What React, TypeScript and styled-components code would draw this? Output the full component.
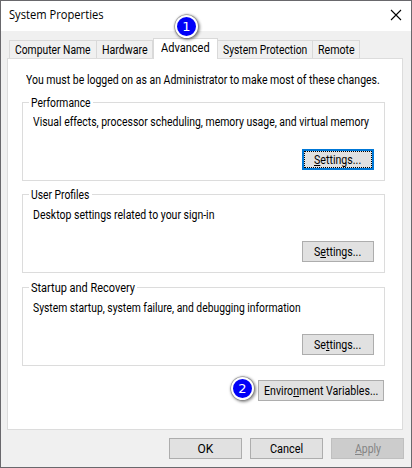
import React from "react";
import styled, { createGlobalStyle } from "styled-components";

const GlobalStyle = createGlobalStyle`
  * { box-sizing: border-box; }
  body {
    margin: 0;
    background: #69686c;
    color: #000;
    font: 12px/14px Roboto, "Liberation Sans", sans-serif;
    white-space: nowrap;
  }
`;

const Desktop = styled.div`
  width: 412px;
  height: 468px;
  padding: 1px;
`;

const Dialog = styled.main`
  display: flex;
  flex-direction: column;
  width: 410px;
  height: 466px;
  background: #f0f0f0;
`;

const TitleBar = styled.header`
  display: flex;
  justify-content: space-between;
  height: 30px;
  padding: 7px 9px 0 8px;
  background: #fff;
  font-family: "Open Sans", "Noto Sans", sans-serif;
`;

const CloseIcon = styled.svg`
  display: block;
  width: 12px;
  height: 12px;
  margin-top: 1px;
`;

/* Condensed label: keeps the glyph height and narrows the advance. */
const LabelBox = styled.span<{ $width: number }>`
  display: block;
  width: ${(p) => p.$width}px;
  height: 14px;
`;

const LabelText = styled.span<{ $scale: number }>`
  display: inline-block;
  transform: scaleX(${(p) => p.$scale});
  transform-origin: 0 0;
`;

const Mnemonic = styled.span`
  text-decoration: underline;
  text-decoration-thickness: 1px;
  text-underline-offset: 1px;
  text-decoration-skip-ink: none;
`;

const Tabs = styled.nav`
  display: flex;
  align-items: flex-end;
  height: 27px;
  padding-left: 8px;
`;

const Tab = styled.div<{ $width: number; $active?: boolean; $joined?: boolean }>`
  position: relative;
  z-index: ${(p) => (p.$active ? 1 : 0)};
  width: ${(p) => p.$width}px;
  height: ${(p) => (p.$active ? 21 : 18)}px;
  margin-bottom: ${(p) => (p.$active ? -1 : 0)}px;
  padding: ${(p) => (p.$active ? "2px 0 0 7px" : "2px 0 0 5px")};
  border: 1px solid #d9d9d9;
  border-bottom: 0;
  border-left-width: ${(p) => (p.$joined ? 0 : 1)}px;
  background: ${(p) => (p.$active ? "#fff" : "#f0f0f0")};
`;

const Panel = styled.section`
  width: 396px;
  height: 372px;
  margin-left: 6px;
  padding: 14px 0 0 14px;
  border: 1px solid #dcdcdc;
  background: #fff;
`;

const Intro = styled.div`
  height: 29px;
  padding-left: 4px;
`;

const Group = styled.section<{ $gap: number }>`
  display: flex;
  flex-direction: column;
  width: 363px;
  height: 79px;
  margin-bottom: ${(p) => p.$gap}px;
  border: 1px solid #dcdcdc;
`;

const GroupTitle = styled.h2`
  align-self: flex-start;
  height: 14px;
  margin: -7px 0 0 6px;
  padding: 0 2px;
  background: #fff;
  font: inherit;
`;

const GroupText = styled.div<{ $top: number }>`
  margin: ${(p) => p.$top}px 0 0 10px;
`;

const Button = styled.button<{ $width: number; $focus?: boolean }>`
  display: flex;
  justify-content: center;
  width: ${(p) => p.$width}px;
  height: 21px;
  padding: ${(p) => (p.$focus ? 0 : 3)}px 0 0;
  border: ${(p) => (p.$focus ? "2px solid #0078d7" : "1px solid #adadad")};
  background: #e1e1e1;
  color: #000;
  font: inherit;

  &:disabled {
    background: #ccc;
    border-color: #bfbfbf;
    color: #838383;
  }
`;

const FocusRing = styled.span`
  display: flex;
  justify-content: center;
  width: 100%;
  height: 17px;
  padding-top: 1px;
  border: 1px dotted #000;
`;

const GroupAction = styled.div`
  margin: auto 10px 10px auto;
`;

const EnvironmentRow = styled.div`
  display: flex;
  justify-content: flex-end;
  margin: 14px 18px 0 0;
`;

const Footer = styled.footer`
  display: flex;
  justify-content: flex-end;
  gap: 8px;
  padding: 8px 7px 0 0;
`;

const BadgeAnchor = styled.span`
  position: relative;
  display: block;
  width: 0;
  height: 0;
`;

const Badge = styled.span<{ $left: number; $top: number }>`
  position: absolute;
  z-index: 2;
  left: ${(p) => p.$left}px;
  top: ${(p) => p.$top}px;
  display: flex;
  align-items: center;
  justify-content: center;
  width: 23px;
  height: 23px;
  border: 2px solid #fff;
  border-radius: 50%;
  background: #0000f8;
  box-shadow: 0 0 1px 0.5px #777, 1px 1px 3px 1px rgba(0, 0, 0, 0.45);
  color: #fff;
  font: 13px/18px "DejaVu Sans", sans-serif;
`;

function Label({ width, scale, children }: { width: number; scale: number; children: React.ReactNode }) {
  return (
    <LabelBox $width={width}>
      <LabelText $scale={scale}>{children}</LabelText>
    </LabelBox>
  );
}

const groups = [
  { title: "Performance", tw: 60, ts: 0.857, text: "Visual effects, processor scheduling, memory usage, and virtual memory", w: 337, s: 0.87, top: 5, gap: 13, key: ["", "S", "ettings..."] },
  { title: "User Profiles", tw: 59, ts: 0.86, text: "Desktop settings related to your sign-in", w: 182, s: 0.874, top: 6, gap: 14, key: ["S", "e", "ttings..."] },
  { title: "Startup and Recovery", tw: 104, ts: 0.914, text: "System startup, system failure, and debugging information", w: 268, s: 0.86, top: 6, gap: 0, key: ["Se", "t", "tings..."] },
];

export default function App() {
  return (
    <Desktop>
      <GlobalStyle />
      <Dialog>
        <TitleBar>
          <Label width={95} scale={0.93}>System Properties</Label>
          <CloseIcon viewBox="0 0 12 12">
            <path d="M1 1L11 11M11 1L1 11" stroke="#000" strokeWidth="1.1" fill="none" />
          </CloseIcon>
        </TitleBar>
        <Tabs>
          <Tab $width={88}><Label width={76} scale={0.86}>Computer Name</Label></Tab>
          <Tab $width={56} $joined><Label width={46} scale={0.885}>Hardware</Label></Tab>
          <Tab $width={65} $active>
            <BadgeAnchor><Badge $left={14} $top={-26}>1</Badge></BadgeAnchor>
            <Label width={49} scale={0.92}>Advanced</Label>
          </Tab>
          <Tab $width={95} $joined><Label width={85} scale={0.86}>System Protection</Label></Tab>
          <Tab $width={47} $joined><Label width={37} scale={0.885}>Remote</Label></Tab>
        </Tabs>
        <Panel>
          <Intro>
            <Label width={354} scale={0.875}>You must be logged on as an Administrator to make most of these changes.</Label>
          </Intro>
          {groups.map((g, i) => {
            const caption = (
              <Label width={49} scale={0.885}>
                {g.key[0]}<Mnemonic>{g.key[1]}</Mnemonic>{g.key[2]}
              </Label>
            );
            return (
              <Group key={g.title} $gap={g.gap}>
                <GroupTitle><Label width={g.tw} scale={g.ts}>{g.title}</Label></GroupTitle>
                <GroupText $top={g.top}><Label width={g.w} scale={g.s}>{g.text}</Label></GroupText>
                <GroupAction>
                  <Button $width={72} $focus={i === 0}>
                    {i === 0 ? <FocusRing>{caption}</FocusRing> : caption}
                  </Button>
                </GroupAction>
              </Group>
            );
          })}
          <EnvironmentRow>
            <BadgeAnchor><Badge $left={-27} $top={-3}>2</Badge></BadgeAnchor>
            <Button $width={126}>
              <Label width={115} scale={0.885}>Enviro<Mnemonic>n</Mnemonic>ment Variables...</Label>
            </Button>
          </EnvironmentRow>
        </Panel>
        <Footer>
          <Button $width={73}><Label width={16} scale={1}>OK</Label></Button>
          <Button $width={73}><Label width={33} scale={0.91}>Cancel</Label></Button>
          <Button $width={73} disabled><Label width={26} scale={0.87}><Mnemonic>A</Mnemonic>pply</Label></Button>
        </Footer>
      </Dialog>
    </Desktop>
  );
}
